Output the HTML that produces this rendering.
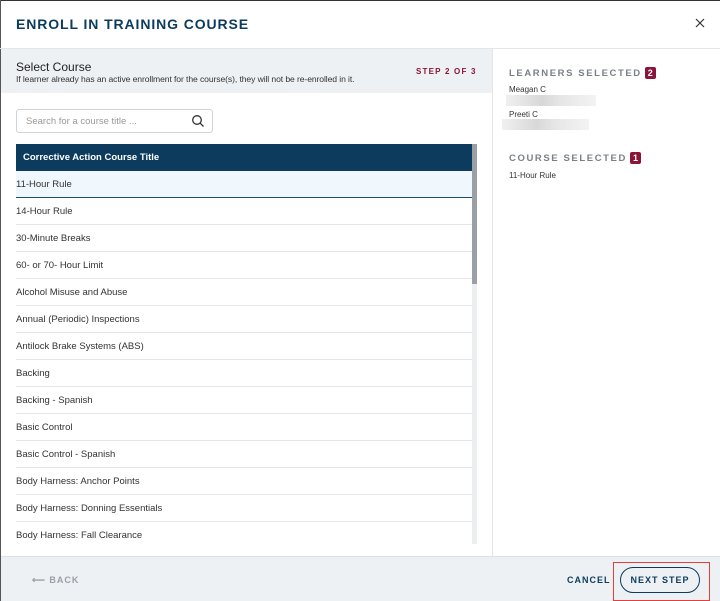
<!DOCTYPE html>
<html><head><style>
*{box-sizing:border-box;margin:0;padding:0}
body{width:720px;height:601px;background:#fff;font-family:"Liberation Sans",sans-serif;position:relative;overflow:hidden;color:#333}
.abs{position:absolute}
.title{left:16px;top:16px;font-size:14px;font-weight:bold;letter-spacing:0.9px;color:#0c3b5e}
.row{position:absolute;left:16px;width:456px;height:27px;border-bottom:1px solid #e3e6ea;font-size:9.5px;line-height:28px;color:#333}
.lbl{font-size:9.5px;font-weight:bold;letter-spacing:1.6px;color:#7b8088}
.badge{display:inline-block;background:#8a1538;color:#fff;font-size:9px;padding:0 3px;border-radius:2px;letter-spacing:0;margin-left:3px;line-height:12px}
.blur{background:linear-gradient(90deg,#f0f0f0,#d8d8d8 40%,#e6e6e6 60%,#f3f3f3);height:11px}
</style></head><body>
<div class="abs" style="left:0;top:0;width:720px;height:1px;background:#333"></div>
<div class="abs" style="left:0;top:0;width:1px;height:601px;background:#555"></div>
<div class="abs title">ENROLL IN TRAINING COURSE</div>
<svg class="abs" style="left:695px;top:18px" width="10" height="10" viewBox="0 0 10 10"><path d="M1 1L9 9M9 1L1 9" stroke="#333" stroke-width="1.2"/></svg>
<div class="abs" style="left:0;top:48px;width:720px;height:1px;background:#e2e5e9"></div>
<div class="abs" style="left:1px;top:49px;width:491px;height:44px;background:#eef1f4"></div>
<div class="abs" style="left:16px;top:60px;font-size:12px;color:#222">Select Course</div>
<div class="abs" style="left:16px;top:74px;font-size:8.6px;color:#333;letter-spacing:-0.1px">If learner already has an active enrollment for the course(s), they will not be re-enrolled in it.</div>
<div class="abs" style="left:416px;top:67px;font-size:8px;font-weight:bold;letter-spacing:1.2px;color:#8a1538">STEP 2 OF 3</div>
<div class="abs" style="left:492px;top:49px;width:1px;height:507px;background:#e2e5e9"></div>
<div class="abs lbl" style="left:509px;top:67px">LEARNERS SELECTED<span class="badge">2</span></div>
<div class="abs" style="left:509px;top:85px;font-size:8px">Meagan C</div>
<div class="abs blur" style="left:506px;top:95px;width:90px"></div>
<div class="abs" style="left:509px;top:110px;font-size:8px">Preeti C</div>
<div class="abs blur" style="left:502px;top:119px;width:87px"></div>
<div class="abs lbl" style="left:509px;top:152px">COURSE SELECTED<span class="badge">1</span></div>
<div class="abs" style="left:509px;top:171px;font-size:8px">11-Hour Rule</div>
<div class="abs" style="left:16px;top:109px;width:197px;height:24px;border:1px solid #cfd4da;border-radius:3px"></div>
<div class="abs" style="left:26px;top:116px;font-size:9.5px;color:#999">Search for a course title ...</div>
<svg class="abs" style="left:191px;top:114px" width="14" height="14" viewBox="0 0 14 14"><circle cx="6" cy="6" r="4.3" fill="none" stroke="#333" stroke-width="1.3"/><line x1="9.2" y1="9.2" x2="12.5" y2="12.5" stroke="#333" stroke-width="1.3"/></svg>
<div class="abs" style="left:16px;top:144px;width:456px;height:27px;background:#0c3b5e;color:#fff;font-size:9.5px;font-weight:bold;line-height:28px;padding-left:7px">Corrective Action Course Title</div>
<div class="row" style="top:171px;background:#f0f7fd;border-bottom:1px solid #1a4a70">11-Hour Rule</div>
<div class="row" style="top:198px">14-Hour Rule</div>
<div class="row" style="top:225px">30-Minute Breaks</div>
<div class="row" style="top:252px">60- or 70- Hour Limit</div>
<div class="row" style="top:279px">Alcohol Misuse and Abuse</div>
<div class="row" style="top:306px">Annual (Periodic) Inspections</div>
<div class="row" style="top:333px">Antilock Brake Systems (ABS)</div>
<div class="row" style="top:360px">Backing</div>
<div class="row" style="top:387px">Backing - Spanish</div>
<div class="row" style="top:414px">Basic Control</div>
<div class="row" style="top:441px">Basic Control - Spanish</div>
<div class="row" style="top:468px">Body Harness: Anchor Points</div>
<div class="row" style="top:495px">Body Harness: Donning Essentials</div>
<div class="row" style="top:522px;border-bottom:none">Body Harness: Fall Clearance</div>
<div class="abs" style="left:472px;top:144px;width:5px;height:400px;background:#eceef0"></div>
<div class="abs" style="left:472px;top:144px;width:5px;height:140px;background:#9aa0a6"></div>
<div class="abs" style="left:1px;top:556px;width:719px;height:45px;background:#eef1f4;border-top:1px solid #dde1e5"></div>
<div class="abs" style="left:32px;top:575px;font-size:9px;font-weight:bold;letter-spacing:1px;color:#9aa0a6">⟵ BACK</div>
<div class="abs" style="left:567px;top:575px;font-size:9px;font-weight:bold;letter-spacing:1px;color:#0c3b5e">CANCEL</div>
<div class="abs" style="left:613px;top:562px;width:97px;height:39px;border:1.5px solid #e04040"></div>
<div class="abs" style="left:620px;top:567px;width:80px;height:26px;border:1.3px solid #0c3b5e;border-radius:13px;font-size:9px;font-weight:bold;letter-spacing:1px;color:#0c3b5e;text-align:center;line-height:24px">NEXT STEP</div>
</body></html>
